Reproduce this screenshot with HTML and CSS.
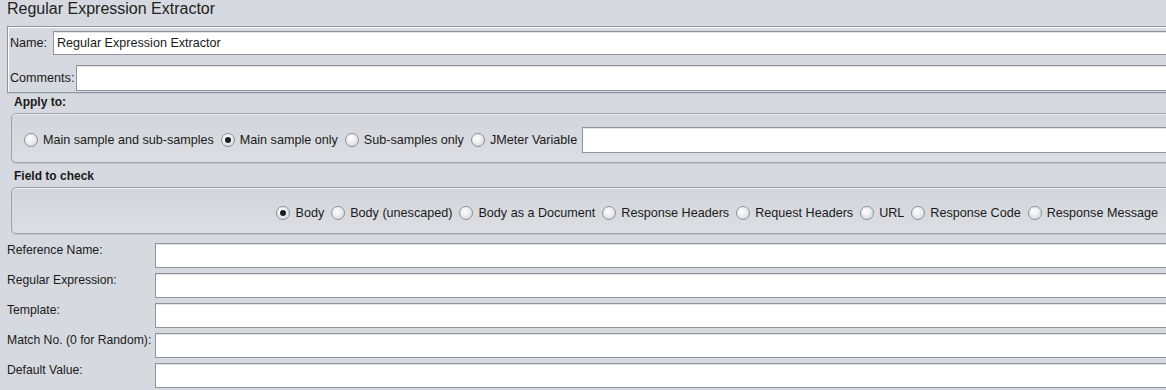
FILE: index.html
```html
<!DOCTYPE HTML>
<html>
<head>
	<title>Regular Expression Extractor</title>
	<meta charset="utf-8" />
	<link rel="stylesheet" href="styles.css">
</head>
<body>
<div class="title">Regular Expression Extractor</div>
<div class="namepanel">
	<div class="namerow">
		<span class="lbl">Name:</span>
		<div class="field name">Regular Expression Extractor</div>
	</div>
	<div class="namerow comments">
		<span class="lbl">Comments:</span>
		<div class="field"></div>
	</div>
</div>

<div class="caption">Apply to:</div>
<div class="group apply">
	<label class="radio"><span class="dot"></span>Main sample and sub-samples</label>
	<label class="radio"><span class="dot on"></span>Main sample only</label>
	<label class="radio"><span class="dot"></span>Sub-samples only</label>
	<label class="radio"><span class="dot"></span>JMeter Variable</label>
	<div class="field var"></div>
</div>

<div class="caption check">Field to check</div>
<div class="group fields">
	<label class="radio"><span class="dot on"></span>Body</label>
	<label class="radio"><span class="dot"></span>Body (unescaped)</label>
	<label class="radio"><span class="dot"></span>Body as a Document</label>
	<label class="radio"><span class="dot"></span>Response Headers</label>
	<label class="radio"><span class="dot"></span>Request Headers</label>
	<label class="radio"><span class="dot"></span>URL</label>
	<label class="radio"><span class="dot"></span>Response Code</label>
	<label class="radio"><span class="dot"></span>Response Message</label>
</div>

<div class="form">
	<div class="row"><span class="lbl">Reference Name:</span><div class="field"></div></div>
	<div class="row"><span class="lbl">Regular Expression:</span><div class="field"></div></div>
	<div class="row"><span class="lbl">Template:</span><div class="field"></div></div>
	<div class="row"><span class="lbl">Match No. (0 for Random):</span><div class="field"></div></div>
	<div class="row"><span class="lbl">Default Value:</span><div class="field"></div></div>
</div>
</body>
</html>
```

FILE: styles.css
```css
body{
	font-family: "Liberation Sans", Arial, sans-serif;
	font-size: 12.6px;
	color: #1a1a1a;
	background-color: #d6d9df;
	margin: 0px;
	padding: 0px;
	overflow: hidden;
}
.title{
	font-size: 16px;
	height: 20px;
	line-height: 18px;
	padding-left: 7px;
	color: #222;
}
.field{
	background-color: #fff;
	border: 1px solid #8f949b;
	border-right: none;
	box-sizing: border-box;
	height: 25px;
	flex: 1;
	padding-left: 3px;
	line-height: 23px;
	box-shadow: inset 0 1px 0 #e4e4e4;
}
.lbl{
	white-space: nowrap;
	flex-shrink: 0;
}
.namepanel{
	margin: 6px -4px 0px 7px;
	border: 1px solid #8e959e;
	border-right: none;
	box-shadow: inset 1px 1px 0 #fff, 0 1px 0 #c7cad0;
	height: 67px;
	box-sizing: border-box;
	padding: 4px 0px 0px 2px;
}
.namerow{
	display: flex;
	align-items: center;
}
.namerow .lbl{
	width: 43px;
}
.namerow .name{
	height: 24px;
}
.namerow.comments{
	margin-top: 10px;
}
.namerow.comments .lbl{
	width: 66px;
}
.namerow.comments .field{
	height: 26px;
}
.caption{
	font-weight: bold;
	font-size: 12px;
	padding-left: 14px;
	margin-top: 2px;
	height: 15px;
	line-height: 14px;
}
.caption.check{
	margin-top: 6px;
}
.group{
	margin: 3px -6px 0px 11px;
	border: 1px solid #9ea3aa;
	border-radius: 5px;
	background: linear-gradient(#d2d5db, #dcdee3);
	box-shadow: inset 0 1px 0 #eceef1, 0 1px 0 #c3c6cc;
	display: flex;
	align-items: center;
	box-sizing: border-box;
}
.apply{
	height: 50px;
	padding-left: 12px;
	padding-top: 3px;
}
.apply .radio{
	margin-right: 7px;
}
.apply .radio:nth-child(4){
	margin-right: 5px;
}
.fields{
	height: 47px;
	justify-content: flex-end;
	padding-right: 6px;
	padding-top: 4px;
}
.radio{
	display: flex;
	align-items: center;
	margin-right: 7px;
	white-space: nowrap;
}
.dot{
	width: 14px;
	height: 14px;
	border: 1px solid #8b9097;
	border-radius: 50%;
	box-sizing: border-box;
	background: radial-gradient(circle at 40% 35%, #ffffff, #e1e4e8 65%, #c6c9ce);
	margin-right: 5px;
	display: flex;
	align-items: center;
	justify-content: center;
}
.dot.on::after{
	content: "";
	width: 6px;
	height: 6px;
	border-radius: 50%;
	background-color: #1e1e1e;
}
.var{
	height: 26px;
}
.form{
	margin-top: 9px;
	padding-left: 7px;
}
.row{
	display: flex;
	align-items: center;
	margin-bottom: 5px;
}
.row .lbl{
	width: 148px;
	font-size: 12.2px;
	align-self: flex-start;
}
```
